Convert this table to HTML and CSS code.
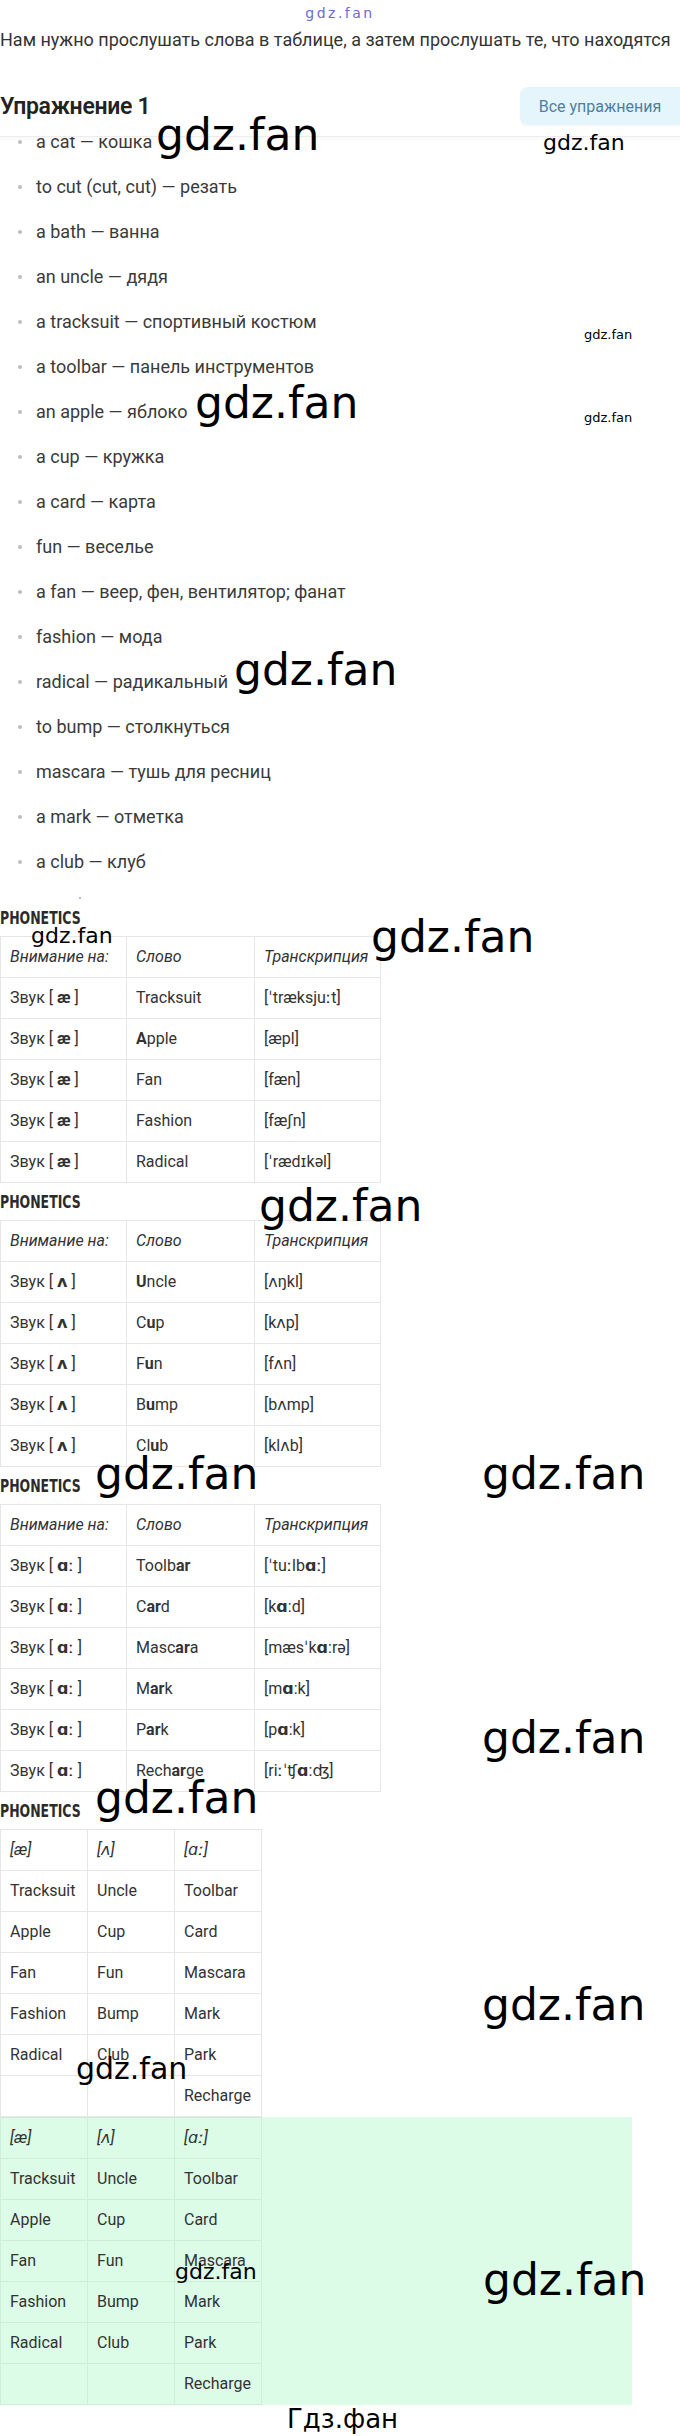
FILE: index.html
```html
<!DOCTYPE html>
<html lang="ru">
<head>
<meta charset="utf-8">
<title>Упражнение 1</title>
<link rel="stylesheet" href="styles.css">
</head>
<body>
<header class="top">
  <div class="brand"><span class="brand-text">gdz.fan</span></div>
  <p class="intro">Нам нужно прослушать слова в таблице, а затем прослушать те, что находятся</p>
  <div class="title-row">
    <h1 class="title">Упражнение 1</h1>
    <a class="all-btn">Все упражнения</a>
  </div>
</header>

<ul class="words">
  <li>a cat — кошка</li>
  <li>to cut (cut, cut) — резать</li>
  <li>a bath — ванна</li>
  <li>an uncle — дядя</li>
  <li>a tracksuit — спортивный костюм</li>
  <li>a toolbar — панель инструментов</li>
  <li>an apple — яблоко</li>
  <li>a cup — кружка</li>
  <li>a card — карта</li>
  <li>fun — веселье</li>
  <li>a fan — веер, фен, вентилятор; фанат</li>
  <li>fashion — мода</li>
  <li>radical — радикальный</li>
  <li>to bump — столкнуться</li>
  <li>mascara — тушь для ресниц</li>
  <li>a mark — отметка</li>
  <li>a club — клуб</li>
</ul>
<div class="gap"><span class="dot"></span></div>

<h2 class="ph"><span>PHONETICS</span></h2>
<table class="tbl tbl-3">
  <colgroup><col class="c1"><col class="c2"><col class="c3"></colgroup>
  <tr><th>Внимание на:</th><th>Слово</th><th>Транскрипция</th></tr>
  <tr><td>Звук [ <b>æ</b> ]</td><td>Tracksuit</td><td>[ˈtræksjuːt]</td></tr>
  <tr><td>Звук [ <b>æ</b> ]</td><td><b>A</b>pple</td><td>[æpl]</td></tr>
  <tr><td>Звук [ <b>æ</b> ]</td><td>Fan</td><td>[fæn]</td></tr>
  <tr><td>Звук [ <b>æ</b> ]</td><td>Fashion</td><td>[fæʃn]</td></tr>
  <tr><td>Звук [ <b>æ</b> ]</td><td>Radical</td><td>[ˈrædɪkəl]</td></tr>
</table>

<h2 class="ph"><span>PHONETICS</span></h2>
<table class="tbl tbl-3">
  <colgroup><col class="c1"><col class="c2"><col class="c3"></colgroup>
  <tr><th>Внимание на:</th><th>Слово</th><th>Транскрипция</th></tr>
  <tr><td>Звук [ <b>ʌ</b> ]</td><td><b>U</b>ncle</td><td>[ʌŋkl]</td></tr>
  <tr><td>Звук [ <b>ʌ</b> ]</td><td>C<b>u</b>p</td><td>[kʌp]</td></tr>
  <tr><td>Звук [ <b>ʌ</b> ]</td><td>F<b>u</b>n</td><td>[fʌn]</td></tr>
  <tr><td>Звук [ <b>ʌ</b> ]</td><td>B<b>u</b>mp</td><td>[bʌmp]</td></tr>
  <tr><td>Звук [ <b>ʌ</b> ]</td><td>Cl<b>u</b>b</td><td>[klʌb]</td></tr>
</table>

<h2 class="ph"><span>PHONETICS</span></h2>
<table class="tbl tbl-3">
  <colgroup><col class="c1"><col class="c2"><col class="c3"></colgroup>
  <tr><th>Внимание на:</th><th>Слово</th><th>Транскрипция</th></tr>
  <tr><td>Звук [ <b>ɑ</b>ː ]</td><td>Toolb<b>ar</b></td><td>[ˈtuːlb<b>ɑ</b>ː]</td></tr>
  <tr><td>Звук [ <b>ɑ</b>ː ]</td><td>C<b>ar</b>d</td><td>[k<b>ɑ</b>:d]</td></tr>
  <tr><td>Звук [ <b>ɑ</b>ː ]</td><td>Masc<b>ar</b>a</td><td>[mæsˈk<b>ɑ</b>:rə]</td></tr>
  <tr><td>Звук [ <b>ɑ</b>ː ]</td><td>M<b>ar</b>k</td><td>[m<b>ɑ</b>:k]</td></tr>
  <tr><td>Звук [ <b>ɑ</b>ː ]</td><td>P<b>ar</b>k</td><td>[p<b>ɑ</b>:k]</td></tr>
  <tr><td>Звук [ <b>ɑ</b>ː ]</td><td>Rech<b>ar</b>ge</td><td>[riːˈʧ<b>ɑ</b>:ʤ]</td></tr>
</table>

<h2 class="ph"><span>PHONETICS</span></h2>
<table class="tbl tbl-4">
  <tr><th>[æ]</th><th>[ʌ]</th><th>[ɑː]</th></tr>
  <tr><td>Tracksuit</td><td>Uncle</td><td>Toolbar</td></tr>
  <tr><td>Apple</td><td>Cup</td><td>Card</td></tr>
  <tr><td>Fan</td><td>Fun</td><td>Mascara</td></tr>
  <tr><td>Fashion</td><td>Bump</td><td>Mark</td></tr>
  <tr><td>Radical</td><td>Club</td><td>Park</td></tr>
  <tr><td></td><td></td><td>Recharge</td></tr>
</table>

<div class="green">
  <table class="tbl tbl-4">
    <tr><th>[æ]</th><th>[ʌ]</th><th>[ɑː]</th></tr>
    <tr><td>Tracksuit</td><td>Uncle</td><td>Toolbar</td></tr>
    <tr><td>Apple</td><td>Cup</td><td>Card</td></tr>
    <tr><td>Fan</td><td>Fun</td><td>Mascara</td></tr>
    <tr><td>Fashion</td><td>Bump</td><td>Mark</td></tr>
    <tr><td>Radical</td><td>Club</td><td>Park</td></tr>
    <tr><td></td><td></td><td>Recharge</td></tr>
  </table>
</div>

<span class="wm wm-xl w1">gdz.fan</span>
<span class="wm wm-m w2">gdz.fan</span>
<span class="wm wm-s w3">gdz.fan</span>
<span class="wm wm-s w4">gdz.fan</span>
<span class="wm wm-xl w5">gdz.fan</span>
<span class="wm wm-xl w6">gdz.fan</span>
<span class="wm wm-m w7">gdz.fan</span>
<span class="wm wm-xl w8">gdz.fan</span>
<span class="wm wm-xl w9">gdz.fan</span>
<span class="wm wm-xl w10">gdz.fan</span>
<span class="wm wm-xl w11">gdz.fan</span>
<span class="wm wm-xl w12">gdz.fan</span>
<span class="wm wm-xl w13">gdz.fan</span>
<span class="wm wm-xl w14">gdz.fan</span>
<span class="wm wm-l w15">gdz.fan</span>
<span class="wm wm-m w16">gdz.fan</span>
<span class="wm wm-xl w17">gdz.fan</span>
<span class="wm wm-ru w18">Гдз.фан</span>
</body>
</html>
```

FILE: styles.css
```css
html, body {
  margin: 0;
  padding: 0;
  background: #fff;
}
body {
  width: 680px;
  height: 2436px;
  overflow: hidden;
  position: relative;
  font-family: Roboto, "DejaVu Sans", sans-serif;
  color: #333;
}

/* header */
.top {
  position: relative;
  z-index: 2;
  background: #fff;
  border-bottom: 1px solid #ededed;
  box-shadow: 0 2px 3px rgba(0, 0, 0, 0.03);
  padding-bottom: 11px;
}
.brand {
  height: 26px;
  display: flex;
  justify-content: center;
  align-items: center;
}
.brand-text {
  font-family: "DejaVu Sans", sans-serif;
  font-size: 14px;
  letter-spacing: 2.5px;
  color: #6b6bdb;
}
.intro {
  margin: 0;
  font-size: 18px;
  line-height: 28px;
  white-space: nowrap;
  color: #333;
}
.title-row {
  margin-top: 33px;
  height: 38px;
  display: flex;
  justify-content: space-between;
  align-items: center;
}
.title {
  margin: 0;
  font-size: 23px;
  font-weight: 600;
  color: #222;
  letter-spacing: -0.3px;
}
.all-btn {
  width: 160px;
  height: 38px;
  display: flex;
  align-items: center;
  justify-content: center;
  background: #e4f6fb;
  color: #4f7f9f;
  font-size: 16px;
  border-radius: 8px 0 0 8px;
  box-shadow: 0 1px 3px rgba(0, 0, 0, 0.04);
}

/* word list */
.words {
  list-style: none;
  margin: -18px 0 0;
  padding: 0;
}
.words li {
  height: 45px;
  display: flex;
  align-items: center;
  font-size: 18px;
  color: #3a3a3a;
}
.words li::before {
  content: "";
  flex: none;
  width: 4px;
  height: 4px;
  border-radius: 50%;
  background: #bdbdbd;
  margin: 0 14px 0 18px;
}
.gap {
  height: 15px;
  display: flex;
  align-items: flex-end;
  padding-left: 79px;
}
.dot {
  width: 2px;
  height: 2px;
  background: #bbb;
}

/* section headings */
.ph {
  margin: 0;
  height: 37px;
  display: flex;
  align-items: center;
  font-family: "DejaVu Sans Condensed", "DejaVu Sans", sans-serif;
  font-weight: bold;
  font-size: 18px;
  color: #2b2b2b;
}
.ph span {
  display: inline-block;
  transform: scaleX(0.77);
  transform-origin: left center;
}

/* tables */
.tbl {
  border-collapse: collapse;
  table-layout: fixed;
}
.tbl th,
.tbl td {
  border: 1px solid #e6e6e6;
  padding: 10px 9px;
  line-height: 20px;
  font-size: 16px;
  font-weight: 400;
  text-align: left;
  white-space: nowrap;
  overflow: hidden;
  color: #333;
}
.tbl th {
  font-style: italic;
}
.tbl b {
  font-weight: 700;
}
.tbl-3 {
  width: 380px;
}
.tbl-3 .c1 { width: 126px; }
.tbl-3 .c2 { width: 128px; }
.tbl-3 .c3 { width: 126px; }
.tbl-4 {
  width: 262px;
}
.green {
  width: 632px;
  background: #dcfce7;
}
.green .tbl th,
.green .tbl td {
  border-color: #cdeed9;
}

/* watermarks */
.wm {
  position: absolute;
  z-index: 5;
  font-family: "DejaVu Sans", sans-serif;
  line-height: 1;
  color: #000;
  white-space: nowrap;
}
.wm-xl { font-size: 44px; }
.wm-l { font-size: 30px; }
.wm-m { font-size: 22px; }
.wm-s { font-size: 13px; }
.wm-ru { font-size: 26px; }

.w1 { left: 156px; top: 113px; }
.w2 { left: 543px; top: 132px; }
.w3 { left: 584px; top: 328px; }
.w4 { left: 584px; top: 411px; }
.w5 { left: 195px; top: 381px; }
.w6 { left: 234px; top: 648px; }
.w7 { left: 31px; top: 925px; }
.w8 { left: 371px; top: 915px; }
.w9 { left: 259px; top: 1184px; }
.w10 { left: 95px; top: 1452px; }
.w11 { left: 482px; top: 1452px; }
.w12 { left: 482px; top: 1716px; }
.w13 { left: 95px; top: 1776px; }
.w14 { left: 482px; top: 1983px; }
.w15 { left: 76px; top: 2054px; }
.w16 { left: 175px; top: 2261px; }
.w17 { left: 483px; top: 2258px; }
.w18 { left: 287px; top: 2406px; }
```
